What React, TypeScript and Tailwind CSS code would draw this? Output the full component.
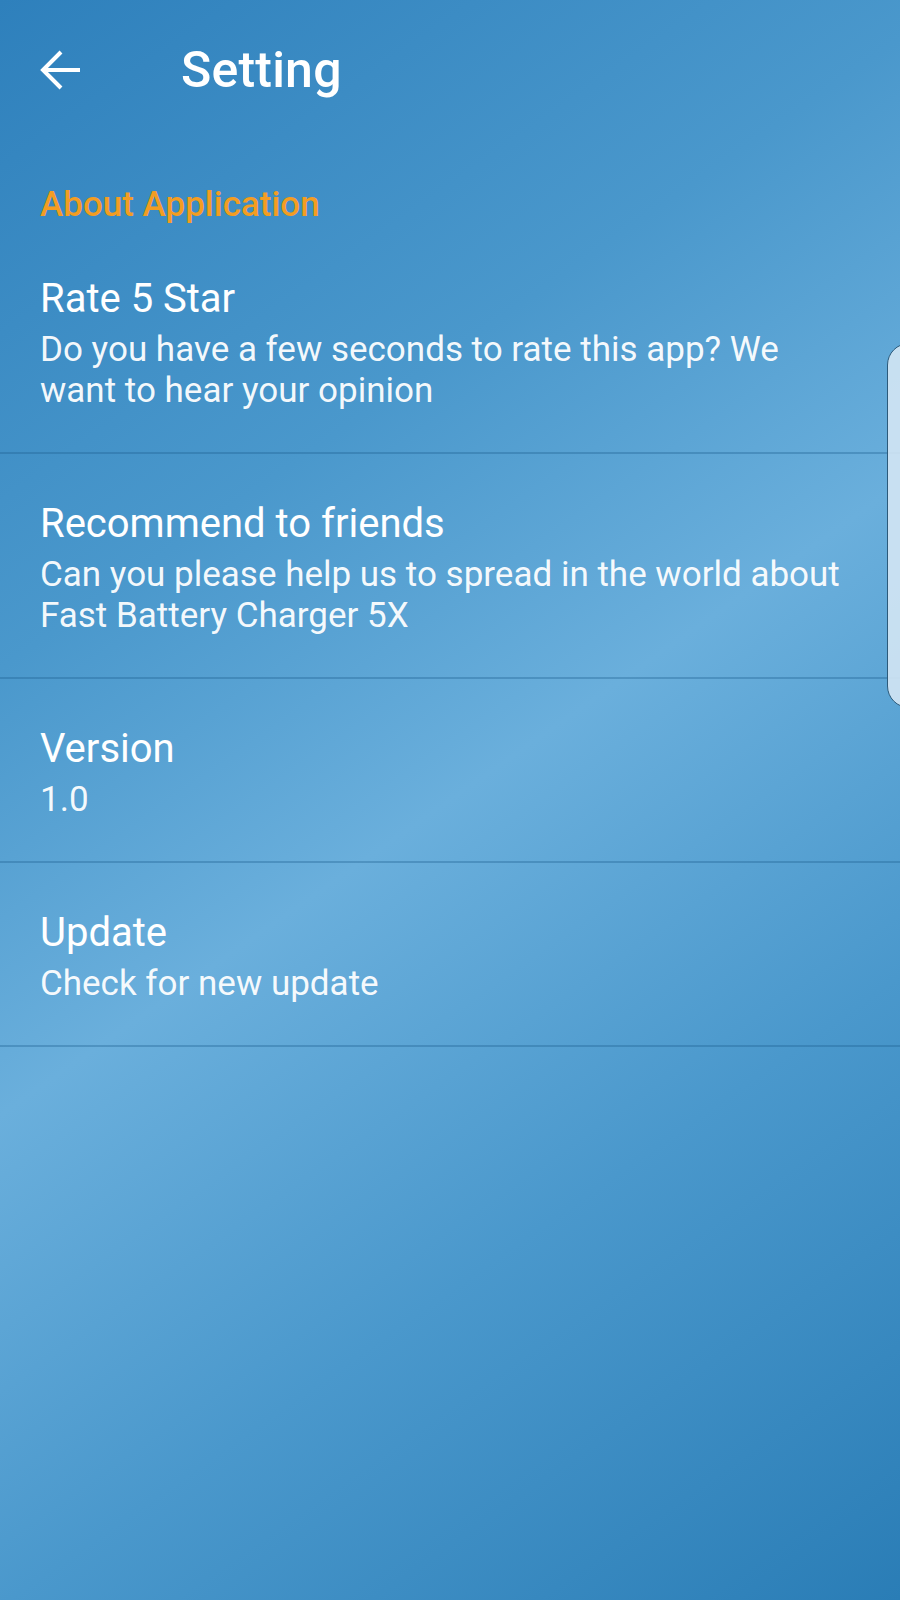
import React from "react";

const items = [
  {
    title: "Rate 5 Star",
    sub: "Do you have a few seconds to rate this app? We want to hear your opinion",
  },
  {
    title: "Recommend to friends",
    sub: "Can you please help us to spread in the world about Fast Battery Charger 5X",
  },
  { title: "Version", sub: "1.0" },
  { title: "Update", sub: "Check for new update" },
];

export default function App() {
  return (
    <div
      className="relative w-[900px] h-[1600px] overflow-hidden text-white bg-[linear-gradient(145deg,#2e80bc_0%,#4a98cc_30%,#6aafdc_50%,#4a98cc_72%,#2a7db6_100%)]"
      style={{ fontFamily: "Roboto, 'Noto Sans', sans-serif" }}
    >
      <header className="flex items-center h-[140px] pl-[40px]">
        <svg width="40" height="40" viewBox="0 0 40 40" fill="none" stroke="white" strokeWidth="4" strokeLinecap="butt" strokeLinejoin="miter">
          <path d="M40 20H4" />
          <path d="M21 2L3 20l18 18" />
        </svg>
        <h1 className="ml-[101px] text-[50px] font-medium leading-none tracking-[0.2px]">Setting</h1>
      </header>

      <div className="pl-[40px] pt-[45px]">
        <div className="text-[35px] leading-[40px] font-medium text-[#f39d22]">About Application</div>
      </div>

      <div className="mt-[4px]">
        {items.map((it) => (
          <div key={it.title} className="pl-[40px] pr-[50px] pt-[46px] pb-[41px] border-b-2 border-[#1d5f8f]/35">
            <div className="text-[40px] leading-[48px]">{it.title}</div>
            <div className="mt-[6px] text-[35px] leading-[41px] text-white/95">{it.sub}</div>
          </div>
        ))}
      </div>

      <div className="absolute left-[887px] top-[343px] w-[30px] h-[365px] rounded-l-[22px] border-[1.5px] border-[#2c5a7a] bg-[#d3e6f4]/90" />
    </div>
  );
}
